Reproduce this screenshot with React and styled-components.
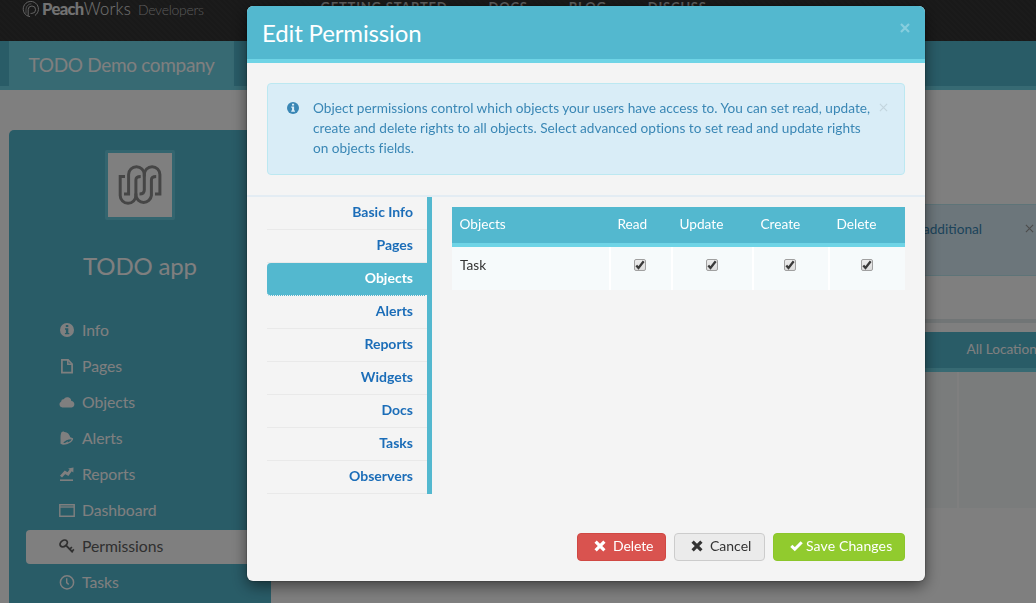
import React from "react";
import styled, { createGlobalStyle, css } from "styled-components";

const c = {
  teal: "#53b8cf",
  tealLight: "#6fd4e6",
  paper: "#f4f4f4",
  infoBg: "#d9edf7",
  infoBorder: "#bce8f1",
  info: "#3a87b5",
};

const GlobalStyle = createGlobalStyle`
  *, *::before, *::after { box-sizing: border-box; }
  html, body { margin: 0; height: 100%; overflow: hidden; }
  body {
    background: #fff;
    font-family: Lato, "Liberation Sans", sans-serif;
    font-size: 13.65px;
    line-height: 20px;
    color: #333;
  }
`;

const Page = styled.div`
  width: 1036px;
  height: 603px;
  overflow: hidden;
  display: flex;
  flex-direction: column;
`;

/* ---------- top bar ---------- */

const TopBar = styled.header`
  flex: none;
  height: 41px;
  padding-left: 22px;
  background: repeating-linear-gradient(45deg, #333 0 2px, #363636 2px 4px);
  display: flex;
  align-items: flex-start;
`;

const Brand = styled.div`
  display: flex;
  align-items: flex-start;
  width: 298px;
  color: #e4e4e4;
  font-size: 16.6px;
  line-height: 19px;
  white-space: nowrap;
  svg { flex: none; margin: 0 2px 0 0; color: #c8c8c8; }
`;

const BrandBold = styled.span`
  font-weight: 900;
  letter-spacing: -0.65px;
`;

const BrandLight = styled.span`
  font-weight: 300;
  letter-spacing: 0.25px;
`;

const BrandSub = styled.span`
  margin-left: 7px;
  font-size: 14px;
  line-height: 19px;
  font-weight: 300;
  letter-spacing: -0.3px;
  color: #b4b4b4;
`;

const TopLinks = styled.nav`
  display: flex;
  gap: 41px;
  padding-left: 0.5px;
  font-size: 13px;
  font-weight: 700;
  line-height: 15px;
  letter-spacing: 0.78px;
  color: #bcbcbc;
  white-space: nowrap;
`;

/* ---------- company bar ---------- */

const CompanyBar = styled.div`
  flex: none;
  height: 49px;
  padding-left: 9px;
  background: ${c.teal};
  box-shadow: inset 0 -4px 0 ${c.tealLight};
  display: flex;
`;

const CompanyTab = styled.div`
  width: 225px;
  padding-left: 19.5px;
  background: ${c.tealLight};
  color: #fff;
  font-size: 19px;
  line-height: 48px;
  letter-spacing: -0.32px;
  white-space: nowrap;
`;

/* ---------- body ---------- */

const Body = styled.div`
  flex: 1;
  min-height: 0;
  display: flex;
  padding: 40px 0 0 9px;
  gap: 20px;
`;

const Sidebar = styled.aside`
  flex: none;
  width: 262px;
  height: 520px;
  padding: 20px 0 0 17px;
  border-radius: 5px;
  background: ${c.teal};
  color: #fff;
`;

const AppLogo = styled.div`
  width: 70px;
  height: 70px;
  margin: 0 0 0 79px;
  border: 3px solid #66cbdf;
  border-radius: 2px;
  background: #fff;
  svg { display: block; }
`;

const AppName = styled.div`
  margin: 28px 17px 0 0;
  height: 36px;
  line-height: 36px;
  font-size: 24px;
  letter-spacing: -0.15px;
  text-align: center;
`;

const SideMenu = styled.ul`
  list-style: none;
  margin: 30px 0 0;
  padding: 0;
  display: flex;
  flex-direction: column;
  gap: 2px;
`;

const SideItem = styled.li`
  height: 34px;
  padding: 0 0 2px 33px;
  display: flex;
  align-items: center;
  gap: 7px;
  border-radius: 4px;
  font-size: 15.75px;
  line-height: 20px;
  letter-spacing: -0.05px;
  svg { flex: none; display: block; }
  ${(p) => p.$active && css`
    background: #fff;
    color: #606060;
  `}
`;

const Main = styled.main`
  flex: 1;
  min-width: 0;
  padding-top: 74px;
`;

const PageNotice = styled.div`
  height: 72px;
  border: 1px solid ${c.infoBorder};
  border-right: 0;
  background: ${c.infoBg};
  color: ${c.info};
  padding-top: 14px;
  display: flex;
  justify-content: flex-end;
  gap: 43px;
  svg { margin: 5px 2px 0 0; color: #999; }
`;

const PageRule = styled.div`
  height: 4px;
  margin-top: 43px;
  background: #e2ebed;
`;

const PageTable = styled.div`
  margin-top: 9px;
`;

const PageTableHead = styled.div`
  height: 40px;
  border-bottom: 4px solid ${c.tealLight};
  background: ${c.teal};
  color: #fff;
  padding-left: 675.5px;
  line-height: 35px;
  white-space: nowrap;
  overflow: hidden;
`;

const PageTableBody = styled.div`
  height: 136px;
  display: grid;
  grid-template-columns: 668px 1fr;
  background: #f5f9f9;
`;

const PageTableCell = styled.div`
  border-right: 2px solid #fff;
`;

/* ---------- modal ---------- */

const Backdrop = styled.div`
  position: fixed;
  inset: 0;
  background: rgba(0, 0, 0, 0.5);
  padding: 6px 0 0 247px;
`;

const Modal = styled.section`
  width: 678px;
  height: 575px;
  border-radius: 6px;
  background: ${c.paper};
  box-shadow: 0 5px 15px rgba(0, 0, 0, 0.5), 0 0 2px rgba(0, 0, 0, 0.5);
  overflow: hidden;
  display: flex;
  flex-direction: column;
`;

const ModalHeader = styled.div`
  flex: none;
  height: 57px;
  padding: 0 15px;
  border-bottom: 4px solid ${c.tealLight};
  background: ${c.teal};
  color: #fff;
  display: flex;
  justify-content: space-between;
  svg { margin-top: 17px; color: #87cede; }
`;

const ModalTitle = styled.h4`
  margin: 0;
  font-size: 24px;
  font-weight: 400;
  line-height: 54px;
  letter-spacing: -0.14px;
`;

const Notice = styled.div`
  flex: none;
  height: 92px;
  margin: 20px 20px 0;
  padding: 14px 16px 0 19px;
  border: 1px solid ${c.infoBorder};
  border-radius: 4px;
  background: ${c.infoBg};
  color: ${c.info};
  display: flex;
  > svg { flex: none; margin-top: 4px; }
  > svg:last-child { margin-top: 5px; color: #c3d5de; }
`;

const NoticeText = styled.p`
  flex: 1;
  margin: 0 0 0 14px;
  letter-spacing: 0.01px;
  white-space: nowrap;
`;

const Rule = styled.div`
  flex: none;
  height: 2px;
  margin-top: 20px;
  background: #e3ecf3;
`;

const Columns = styled.div`
  flex: 1;
  padding: 0 20px;
  display: flex;
  align-items: flex-start;
  gap: 20px;
`;

const Tabs = styled.ul`
  list-style: none;
  width: 165px;
  margin: 0;
  padding: 0;
  border-right: 5px solid ${c.teal};
`;

const Tab = styled.li`
  height: 33px;
  padding-right: 14px;
  border-bottom: 1px solid #e9e9e9;
  line-height: 30px;
  font-size: 14px;
  font-weight: 700;
  text-align: right;
  color: #1b6db8;
  ${(p) => p.$active && css`
    background: ${c.teal};
    border-bottom: 1px dotted #f4f4f4;
    border-radius: 4px 0 0 4px;
    color: #fff;
  `}
`;

const Grid = styled.div`
  flex: 1;
  margin-top: 10px;
`;

const gridRow = css`
  display: grid;
  grid-template-columns: 158px 62px 81px 76px 76px;
`;

const GridHead = styled.div`
  ${gridRow}
  height: 40px;
  border-bottom: 4px solid ${c.tealLight};
  background: ${c.teal};
  color: #fff;
  line-height: 35px;
`;

const HeadCell = styled.div`
  padding-left: 7.5px;
`;

const GridRow = styled.div`
  ${gridRow}
  height: 43px;
  background: #f6fafb;
`;

const RowCell = styled.div`
  padding: ${(p) => (p.$label ? "8px 0 0 8px" : "12px 2px 0 0")};
  border-left: ${(p) => (p.$label ? "0" : "1px solid #fff")};
  border-right: ${(p) => (p.$last ? "0" : "1px solid #fff")};
  display: flex;
  justify-content: ${(p) => (p.$label ? "flex-start" : "center")};
`;

const Check = styled.span`
  width: 12px;
  height: 12px;
  border: 1px solid #a0a0a0;
  border-radius: 2px;
  background: linear-gradient(#ececec, #dcdcdc);
  svg { display: block; overflow: visible; }
`;

const Footer = styled.div`
  flex: none;
  height: 48px;
  padding: 0 20px;
  display: flex;
  justify-content: flex-end;
  gap: 8px;
`;

const tones = {
  danger: ["#d9534f", "#d04843", "#fff"],
  plain: ["#ebebeb", "#cccccc", "#333"],
  success: ["#91cb2e", "#8cc62b", "#fff"],
};

const Button = styled.button`
  height: 28px;
  width: ${(p) => p.$width}px;
  padding: 0 0 2px ${(p) => p.$pad}px;
  border: 1px solid ${(p) => tones[p.$tone][1]};
  border-radius: 4px;
  background: ${(p) => tones[p.$tone][0]};
  color: ${(p) => tones[p.$tone][2]};
  font: 400 14px/24px Lato, sans-serif;
  letter-spacing: ${(p) => p.$tracking || 0}px;
  display: flex;
  align-items: center;
  gap: ${(p) => p.$gap}px;
  white-space: nowrap;
  svg { flex: none; }
`;

/* ---------- drawings ---------- */

const InfoIcon = ({ size = 14, hole }) => (
  <svg width={size} height={size} viewBox="0 0 14 14">
    <circle cx="7" cy="7" r="7" fill="currentColor" />
    <path d="M5.8 2h2.5v2.1H5.8zM5 5.3h3.3v4.6H9.3v1.4H4.9V9.9h1V6.7H5z" fill={hole} />
  </svg>
);

const InfoItemIcon = () => (
  <svg width="16" height="16" viewBox="-1 -1 16 16">
    <circle cx="7" cy="7" r="7" fill="currentColor" />
    <path d="M5.8 2h2.5v2.1H5.8zM5 5.3h3.3v4.6H9.3v1.4H4.9V9.9h1V6.7H5z" fill={c.teal} />
  </svg>
);

const FileIcon = () => (
  <svg width="16" height="16" viewBox="0 0 16 16" fill="none" stroke="currentColor" strokeWidth="1.7">
    <path d="M2.9 1.8h6.2L13.1 6v8.7H2.9z" />
    <path d="M8.8 1.8V6.2H13" strokeWidth="1.5" />
  </svg>
);

const CloudIcon = () => (
  <svg width="16" height="16" viewBox="0 0 16 16" fill="currentColor">
    <path d="M3.4 13.6A3.3 3.3 0 0 1 2.2 7.4 2.3 2.3 0 0 1 4.7 5.2a4.1 4.1 0 0 1 7.6 1.7A3.4 3.4 0 0 1 12.7 13.6z" />
  </svg>
);

const BellIcon = () => (
  <svg width="16" height="16" viewBox="0 0 16 16">
    <path d="M2.3 2.5C3.3 1.5 4.3 1.3 5.3 1.9 8.5 1.8 10.4 4 11.3 7.2L14 8.3C15 10.2 10.8 14.6 4 14.7L1.5 13.8C1.9 9.8.9 6 2.3 2.5z" fill="currentColor" />
    <path d="M4.2 13.1C5.500 10.900 8.800 9.300 12.600 9.300c-.6 1.700-2.400 2.700-4 3.200l.4-1.300-2 1.200c-.9.6-1.800.8-2.800.7z" fill={c.teal} />
  </svg>
);

const ChartIcon = () => (
  <svg width="16" height="16" viewBox="0 0 16 16">
    <path d="M1 13.400h13v1.600H1z" fill="currentColor" />
    <path d="M2 10.600l4-4.300 3 1.800 3.300-4.600" fill="none" stroke="currentColor" strokeWidth="2.800" />
    <path d="M9.200 2.600L14.500 1.600 14.300 6.500z" fill="currentColor" />
  </svg>
);

const WindowIcon = () => (
  <svg width="16" height="16" viewBox="0 0 16 16" fill="none" stroke="currentColor">
    <path d="M.8 2.700h14.400v11.600H.8z" strokeWidth="1.400" />
    <path d="M1 5h14" strokeWidth="1.300" />
  </svg>
);

const KeyIcon = () => (
  <svg width="16" height="16" viewBox="0 0 16 16" fill="none" stroke="currentColor">
    <ellipse cx="4.700" cy="5.400" rx="4" ry="2.900" transform="rotate(-38 4.700 5.400)" strokeWidth="1.800" />
    <path d="M7 7.400l6.800 7" strokeWidth="2" />
    <path d="M10.600 11.400l2.300-2.400M12.700 13.500l2.200-2.200" strokeWidth="1.700" />
  </svg>
);

const ClockIcon = () => (
  <svg width="16" height="16" viewBox="0 0 16 16" fill="none" stroke="currentColor">
    <circle cx="8" cy="8.400" r="6.600" strokeWidth="1.500" />
    <path d="M7.700 4.200V8.600l2 2" strokeWidth="1.400" />
  </svg>
);

const CrossIcon = ({ size = 10, weight = 2 }) => (
  <svg width={size} height={size} viewBox="0 0 10 10" fill="none" stroke="currentColor" strokeWidth={weight}>
    <path d="M1 1l8 8M9 1l-8 8" />
  </svg>
);

const HeavyCross = () => (
  <svg width="12" height="12" viewBox="0 0 12 12" fill="none" stroke="currentColor" strokeWidth="3.200">
    <path d="M1.600 1.600l8.800 8.800M10.400 1.600l-8.800 8.800" />
  </svg>
);

const TickIcon = () => (
  <svg width="13" height="12" viewBox="0 0 13 12" fill="none" stroke="currentColor" strokeWidth="3">
    <path d="M1.300 5.800l3.500 3.400L11.700 2.200" />
  </svg>
);

const PeachMark = () => (
  <svg width="18" height="18" viewBox="0 0 18 18" fill="none" stroke="currentColor">
    <path d="M8 16.600A7.600 7.600 0 1 1 13 15.400" strokeWidth="1" />
    <path d="M6.200 15.800V9.600a3.700 3.700 0 1 1 3.700 3.800H8.500" strokeWidth="1" />
    <path d="M4 13.500V9.200A5.500 5.500 0 0 1 9.400 3.800" strokeWidth=".7" />
  </svg>
);

const AppMark = () => (
  <svg width="64" height="64" viewBox="0 0 64 64" fill="none" stroke="#8c8c8c" strokeWidth="3">
    <path d="M17 23.600H12.200V42.500a7.800 7.800 0 0 0 15.700 0V27q0-3.400 4.800-3.400" />
    <path d="M16 41h4.600V21.500a7.800 7.800 0 0 1 15.700 0V37q0 4-4.800 4" />
    <path d="M27.900 40.500v2a7.800 7.800 0 0 0 15.500 0V27q0-3.400 4.800-3.400" />
    <path d="M36.300 23.500v-2a7.800 7.800 0 0 1 15.600 0V41H47" />
  </svg>
);

const CheckMark = () => (
  <svg width="10" height="10" viewBox="0 0 10 10" fill="none" stroke="#3a3a3a" strokeWidth="2.300">
    <path d="M1.300 5.400l2.200 2.500L8.700 1.300" />
  </svg>
);

/* ---------- data ---------- */

const sideItems = [
  ["Info", <InfoItemIcon />],
  ["Pages", <FileIcon />],
  ["Objects", <CloudIcon />],
  ["Alerts", <BellIcon />],
  ["Reports", <ChartIcon />],
  ["Dashboard", <WindowIcon />],
  ["Permissions", <KeyIcon />],
  ["Tasks", <ClockIcon />],
];

const tabs = ["Basic Info", "Pages", "Objects", "Alerts", "Reports", "Widgets", "Docs", "Tasks", "Observers"];
const rights = ["Read", "Update", "Create", "Delete"];

export default function App() {
  return (
    <>
      <GlobalStyle />
      <Page>
        <TopBar>
          <Brand>
            <PeachMark />
            <BrandBold>Peach</BrandBold>
            <BrandLight>Works</BrandLight>
            <BrandSub>Developers</BrandSub>
          </Brand>
          <TopLinks>
            <span>GETTING STARTED</span>
            <span>DOCS</span>
            <span>BLOG</span>
            <span>DISCUSS</span>
          </TopLinks>
        </TopBar>
        <CompanyBar>
          <CompanyTab>TODO Demo company</CompanyTab>
        </CompanyBar>
        <Body>
          <Sidebar>
            <AppLogo><AppMark /></AppLogo>
            <AppName>TODO app</AppName>
            <SideMenu>
              {sideItems.map(([name, icon]) => (
                <SideItem key={name} $active={name === "Permissions"}>
                  {icon}
                  {name}
                </SideItem>
              ))}
            </SideMenu>
          </Sidebar>
          <Main>
            <PageNotice>
              <span>additional</span>
              <CrossIcon size={9} weight={1.3} />
            </PageNotice>
            <PageRule />
            <PageTable>
              <PageTableHead>All Location</PageTableHead>
              <PageTableBody>
                <PageTableCell />
              </PageTableBody>
            </PageTable>
          </Main>
        </Body>
      </Page>
      <Backdrop>
        <Modal>
          <ModalHeader>
            <ModalTitle>Edit Permission</ModalTitle>
            <CrossIcon size={10} weight={2.2} />
          </ModalHeader>
          <Notice>
            <InfoIcon size={12} hole={c.infoBg} />
            <NoticeText>
              Object permissions control which objects your users have access to. You can set read, update,
              <br />
              create and delete rights to all objects. Select advanced options to set read and update rights
              <br />
              on objects fields.
            </NoticeText>
            <CrossIcon size={9} weight={1.3} />
          </Notice>
          <Rule />
          <Columns>
            <Tabs>
              {tabs.map((t) => (
                <Tab key={t} $active={t === "Objects"}>{t}</Tab>
              ))}
            </Tabs>
            <Grid>
              <GridHead>
                <HeadCell>Objects</HeadCell>
                {rights.map((r) => (
                  <HeadCell key={r}>{r}</HeadCell>
                ))}
              </GridHead>
              <GridRow>
                <RowCell $label>Task</RowCell>
                {rights.map((r) => (
                  <RowCell key={r} $last={r === "Delete"}>
                    <Check><CheckMark /></Check>
                  </RowCell>
                ))}
              </GridRow>
            </Grid>
          </Columns>
          <Footer>
            <Button $tone="danger" $width={89} $pad={16} $gap={7} $tracking={-0.1}><HeavyCross />Delete</Button>
            <Button $tone="plain" $width={91} $pad={16} $gap={7}><HeavyCross />Cancel</Button>
            <Button $tone="success" $width={132} $pad={16} $gap={3} $tracking={0.12}><TickIcon />Save Changes</Button>
          </Footer>
        </Modal>
      </Backdrop>
    </>
  );
}
